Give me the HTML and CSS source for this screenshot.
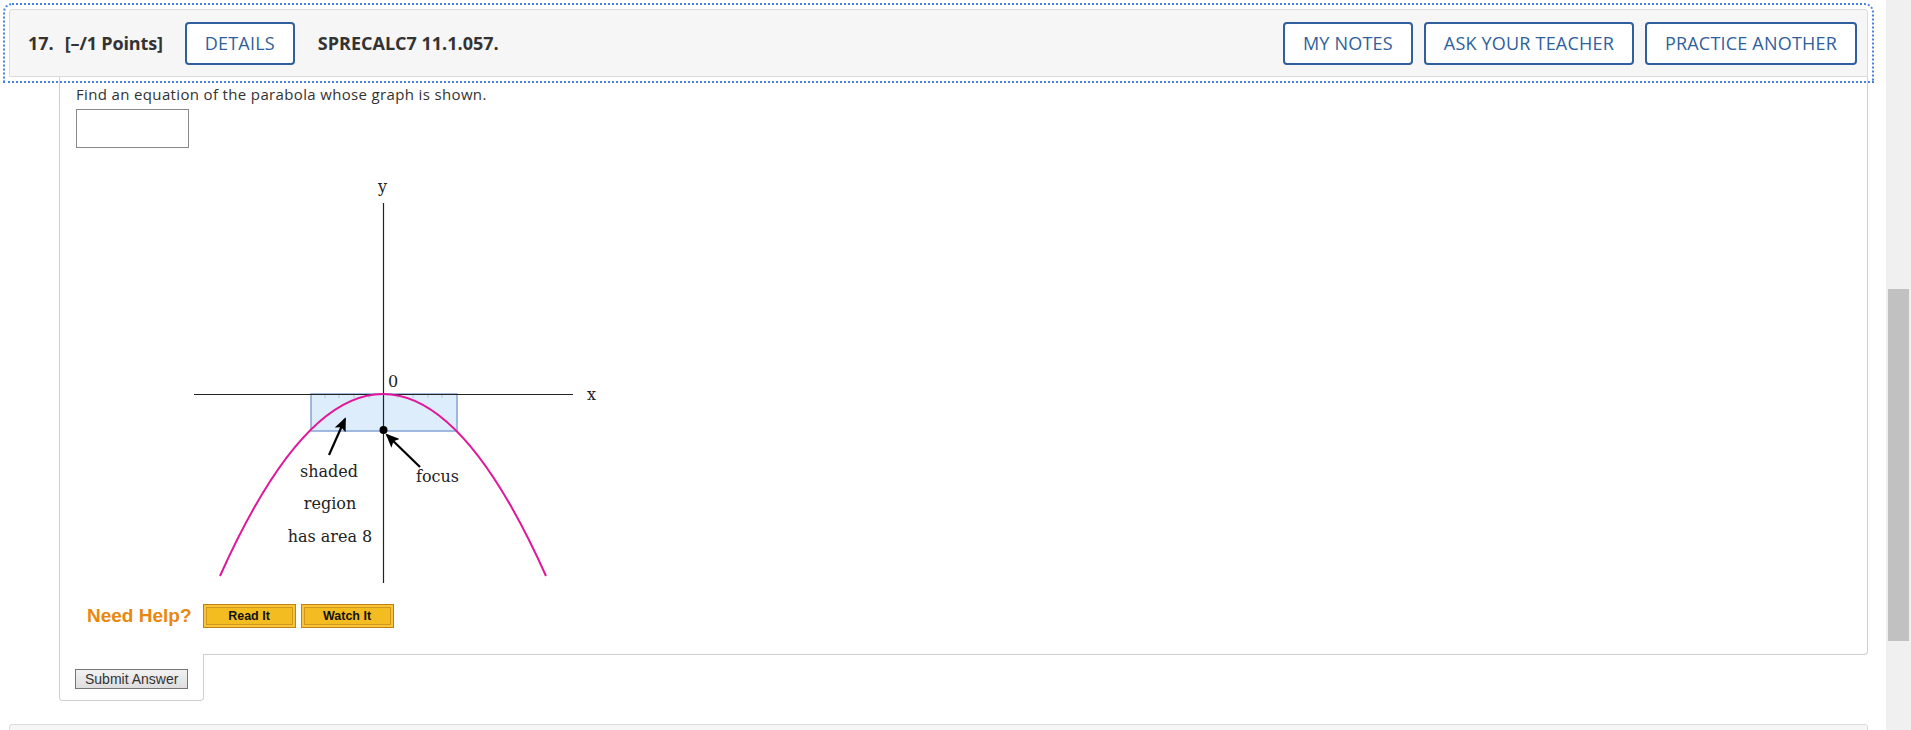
FILE: index.html
```html
<!DOCTYPE html>
<html>
<head>
<meta charset="utf-8">
<link rel="stylesheet" href="styles.css">
</head>
<body>
<div class="page">
  <div class="main">
    <div class="question">
      <div class="qhead">
        <span class="qnum">17.</span>
        <span class="qpts">[–/1 Points]</span>
        <button class="obtn details">DETAILS</button>
        <span class="qcode">SPRECALC7 11.1.057.</span>
        <div class="spacer"></div>
        <button class="obtn">MY NOTES</button>
        <button class="obtn">ASK YOUR TEACHER</button>
        <button class="obtn">PRACTICE ANOTHER</button>
      </div>
      <div class="qbody">
        <p class="prompt">Find an equation of the parabola whose graph is shown.</p>
        <input class="answer" type="text">
        <svg class="graph" width="540" height="430" viewBox="0 0 540 430">
          <defs>
            <marker id="ah" markerWidth="14" markerHeight="12" refX="12" refY="6" orient="auto" markerUnits="userSpaceOnUse">
              <path d="M0,0 L14,6 L0,12 L3,6 Z" fill="#000"/>
            </marker>
          </defs>
          <rect x="235" y="234" width="146" height="37" fill="#deedfc" stroke="#86a3d3" stroke-width="1.5"/>
          <g stroke="#b3c4e0" stroke-width="1">
            <line x1="249" y1="234" x2="249" y2="238"/>
            <line x1="263" y1="234" x2="263" y2="238"/>
            <line x1="278" y1="234" x2="278" y2="238"/>
            <line x1="293" y1="234" x2="293" y2="238"/>
            <line x1="322" y1="234" x2="322" y2="238"/>
            <line x1="337" y1="234" x2="337" y2="238"/>
            <line x1="352" y1="234" x2="352" y2="238"/>
            <line x1="366" y1="234" x2="366" y2="238"/>
          </g>
          <line x1="118" y1="234.5" x2="497" y2="234.5" stroke="#222" stroke-width="1.2"/>
          <line x1="307.5" y1="43" x2="307.5" y2="423" stroke="#222" stroke-width="1.2"/>
          <path d="M144 416 Q307 52 470 416" fill="none" stroke="#e0179a" stroke-width="2"/>
          <circle cx="307.5" cy="270" r="4" fill="#000"/>
          <line x1="253" y1="295" x2="269" y2="259" stroke="#000" stroke-width="2.2" marker-end="url(#ah)"/>
          <line x1="344" y1="307" x2="311" y2="275" stroke="#000" stroke-width="2.2" marker-end="url(#ah)"/>
          <g class="lbl">
            <text x="302" y="32">y</text>
            <text x="511" y="240">x</text>
            <text x="312" y="227">0</text>
            <text x="253" y="317" text-anchor="middle">shaded</text>
            <text x="254" y="349" text-anchor="middle">region</text>
            <text x="254" y="382" text-anchor="middle">has area 8</text>
            <text x="340" y="322">focus</text>
          </g>
        </svg>
        <div class="help">
          <span class="needhelp">Need Help?</span>
          <button class="ybtn">Read It</button>
          <button class="ybtn">Watch It</button>
        </div>
      </div>
      <div class="submittab">
        <button class="submit">Submit Answer</button>
      </div>
    </div>
    <div class="nextq"></div>
  </div>
  <div class="scrollbar"><div class="thumb"></div></div>
</div>
</body>
</html>
```

FILE: styles.css
```css
html, body {
  margin: 0;
  padding: 0;
  height: 730px;
  overflow: hidden;
  background: #fff;
}
.page {
  display: flex;
  height: 730px;
}
.main {
  flex: 1;
  padding: 9px 18px 0 9px;
  font-family: "Open Sans", sans-serif;
  color: #333;
}
.qhead {
  display: flex;
  align-items: center;
  height: 66px;
  padding: 0 10px 0 18px;
  background: #f6f6f6;
  border: 1px solid #dcdcdc;
  border-radius: 3px 3px 0 0;
  outline: 2px dotted #4783e6;
  outline-offset: 4px;
}
.qnum {
  font-weight: 700;
  font-size: 18px;
  margin-right: 11px;
}
.qpts {
  font-weight: 700;
  font-size: 18px;
  letter-spacing: -0.15px;
  margin-right: 22px;
}
.qcode {
  font-weight: 700;
  font-size: 18px;
  margin-left: 23px;
}
.spacer { flex: 1; }
.obtn {
  height: 43px;
  padding: 0 18px;
  border: 2px solid #2f5f9c;
  border-radius: 4px;
  background: #fff;
  color: #2f5f9c;
  font-family: "Open Sans", sans-serif;
  font-size: 18px;
  letter-spacing: 0.2px;
  margin-left: 11px;
  white-space: nowrap;
}
.obtn.details {
  margin-left: 0;
}
.qbody {
  margin-left: 50px;
  border: 1px solid #cfcfcf;
  border-top: none;
  border-radius: 0 0 4px 0;
  padding: 7px 0 26px 16px;
}
.prompt {
  margin: 0;
  font-size: 15px;
  letter-spacing: 0.35px;
  line-height: 20px;
}
.answer {
  display: block;
  margin-top: 5px;
  width: 111px;
  height: 37px;
  padding: 0;
  border: 1px solid #8a8a8a;
  box-sizing: content-box;
}
.graph {
  display: block;
  margin-top: 12px;
}
.lbl text {
  font-family: "DejaVu Serif", serif;
  font-size: 16px;
  fill: #222;
}
.help {
  display: flex;
  align-items: center;
  margin-top: 14px;
  margin-left: 11px;
  height: 24px;
}
.needhelp {
  font-family: "Liberation Sans", Arial, sans-serif;
  font-weight: 700;
  font-size: 19px;
  color: #e8880e;
  margin-right: 11px;
}
.ybtn {
  width: 93px;
  height: 24px;
  margin-right: 5px;
  padding: 0;
  border: 1px solid #c47f12;
  background: #f3bd22;
  box-shadow: inset 0 0 0 2px #f6c53a, inset 0 0 0 3px #d4951c;
  font-family: "Liberation Sans", Arial, sans-serif;
  font-weight: 700;
  font-size: 12.5px;
  color: #111;
}
.submittab {
  width: 145px;
  margin-left: 50px;
  margin-top: -1px;
  height: 47px;
  border: 1px solid #cfcfcf;
  border-top: none;
  border-radius: 0 0 4px 4px;
  background: #fff;
  padding: 15px 0 0 15px;
  box-sizing: border-box;
}
.submit {
  display: block;
  height: 20px;
  padding: 0 9px;
  border: 1px solid #767676;
  background: linear-gradient(#f2f2f2, #dedede);
  font-family: "Liberation Sans", Arial, sans-serif;
  font-size: 14px;
  color: #333;
  line-height: 18px;
}
.nextq {
  margin-top: 23px;
  height: 20px;
  background: #f6f6f6;
  border: 1px solid #dcdcdc;
  border-radius: 3px 3px 0 0;
}
.scrollbar {
  width: 25px;
  background: #f0f0f0;
  position: relative;
}
.thumb {
  position: absolute;
  left: 2px;
  right: 2px;
  top: 289px;
  height: 352px;
  background: #c1c1c1;
}
```
